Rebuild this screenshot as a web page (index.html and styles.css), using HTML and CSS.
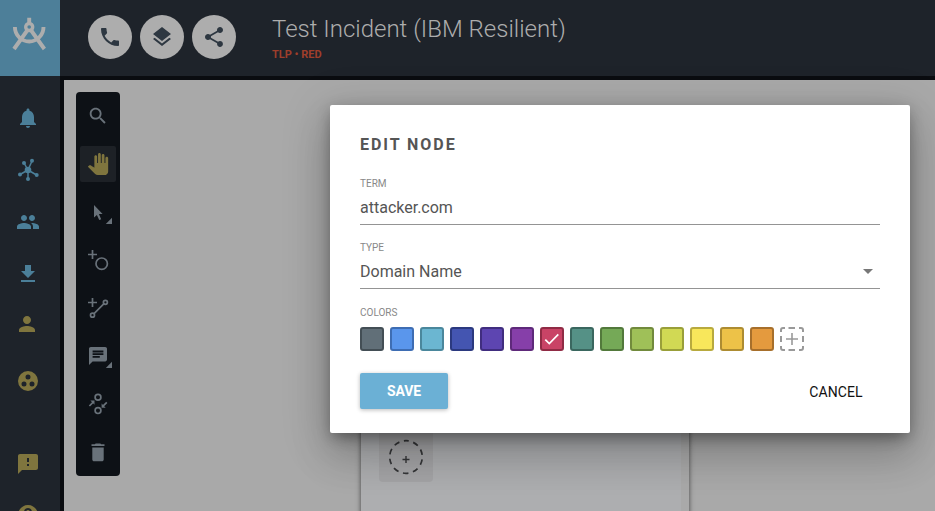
FILE: index.html
```html
<!DOCTYPE html>
<html lang="en">
<head>
<meta charset="utf-8">
<title>Test Incident (IBM Resilient)</title>
<link rel="stylesheet" href="styles.css">
</head>
<body>
<div class="app">
  <aside class="sidebar">
    <div class="logo">
      <svg width="60" height="76" viewBox="0 0 60 76" fill="none" stroke="#adadad" stroke-width="3.900">
        <path d="M29.2 17.800v5.500M27.200 30.500L14 49M31.200 30.500L44.400 49"/>
        <path d="M14.900 27a14.300 14.500 0 0 0 28.600 0"/>
        <circle cx="29.200" cy="27" r="3.500" stroke-width="3.400"/>
      </svg>
    </div>
    <nav class="nav">
      <svg class="icon blue" viewBox="0 0 24 24"><path d="M12 22c1.100 0 2-.9 2-2h-4c0 1.100.89 2 2 2zm6-6v-5c0-3.070-1.640-5.640-4.500-6.320V4c0-.83-.67-1.500-1.500-1.500s-1.500.67-1.500 1.500v.68C7.630 5.360 6 7.920 6 11v5l-2 2v1h16v-1l-2-2z"/></svg>
      <svg class="icon blue" viewBox="0 0 24 24"><path d="M12 12L8 5M12 12l4-9M12 12l-8 4.500M12 12v9M12 12l8.500 5" stroke="currentColor" stroke-width="1.500"/><circle cx="12" cy="12" r="3.300"/><circle cx="8" cy="5" r="2"/><circle cx="16" cy="2.800" r="2"/><circle cx="4" cy="16.500" r="2"/><circle cx="12" cy="21" r="2"/><circle cx="20.700" cy="17" r="2"/></svg>
      <svg class="icon blue" viewBox="0 0 24 24"><path d="M16 11c1.660 0 2.990-1.340 2.990-3S17.660 5 16 5s-3 1.340-3 3 1.340 3 3 3zm-8 0c1.660 0 2.990-1.340 2.990-3S9.660 5 8 5 5 6.340 5 8s1.340 3 3 3zm0 2c-2.330 0-7 1.170-7 3.500V19h14v-2.500C15 14.170 10.330 13 8 13zm8 0c-.29 0-.62.02-.97.05 1.160.84 1.970 1.970 1.970 3.450V19h6v-2.500c0-2.330-4.670-3.500-7-3.500z"/></svg>
      <svg class="icon blue" viewBox="0 0 24 24"><path d="M19 9h-4V3H9v6H5l7 7 7-7zM5 18v2h14v-2H5z"/></svg>
      <svg class="icon gold person" viewBox="0 0 24 24"><path d="M12 12c2.210 0 4-1.790 4-4s-1.790-4-4-4-4 1.790-4 4 1.790 4 4 4zm0 2c-2.670 0-8 1.340-8 4v2h16v-2c0-2.660-5.330-4-8-4z"/></svg>
      <svg class="icon gold group" viewBox="0 0 24 24"><path fill-rule="evenodd" d="M12 2a10 10 0 1 0 0 20a10 10 0 0 0 0-20zM8 17.500a2.500 2.500 0 1 1 0-5a2.500 2.500 0 0 1 0 5zM9.500 8a2.500 2.500 0 1 1 5 0a2.500 2.500 0 0 1-5 0zM16 17.500a2.500 2.500 0 1 1 0-5a2.500 2.500 0 0 1 0 5z"/></svg>
      <svg class="icon gold feedback" viewBox="0 0 24 24"><path fill-rule="evenodd" d="M20 2H4c-1.100 0-2 .9-2 2v18l4-4h14c1.100 0 2-.9 2-2V4c0-1.100-.9-2-2-2zm-7 12h-2v-2h2v2zm0-4h-2V6h2v4z"/></svg>
      <svg class="icon gold help" viewBox="0 0 24 24"><path d="M12 2C6.480 2 2 6.480 2 12s4.480 10 10 10 10-4.480 10-10S17.520 2 12 2zm1 17h-2v-2h2v2zm2.070-7.750l-.9.920C13.450 12.900 13 13.500 13 15h-2v-.5c0-1.100.45-2.100 1.170-2.830l1.240-1.260c.37-.36.59-.86.59-1.410 0-1.100-.9-2-2-2s-2 .9-2 2H8c0-2.210 1.790-4 4-4s4 1.790 4 4c0 .88-.36 1.680-.93 2.250z"/></svg>
    </nav>
  </aside>
  <div class="main">
    <header class="header">
      <div class="actions">
        <button class="round" aria-label="Call"><svg viewBox="0 0 24 24"><path d="M6.620 10.790c1.440 2.830 3.760 5.140 6.590 6.590l2.200-2.200c.27-.27.67-.36 1.020-.24 1.120.37 2.330.57 3.570.57.55 0 1 .45 1 1V20c0 .55-.45 1-1 1-9.390 0-17-7.610-17-17 0-.55.45-1 1-1h3.500c.55 0 1 .45 1 1 0 1.250.2 2.450.57 3.570.11.35.03.74-.25 1.020l-2.200 2.200z"/></svg></button>
        <button class="round" aria-label="Layers"><svg viewBox="0 0 24 24"><path d="M11.990 18.540l-7.370-5.730L3 14.070l9 7 9-7-1.630-1.270-7.380 5.740zM12 16l7.360-5.730L21 9l-9-7-9 7 1.630 1.270L12 16z"/></svg></button>
        <button class="round" aria-label="Share"><svg viewBox="0 0 24 24"><path d="M18 16.080c-.76 0-1.440.3-1.960.77L8.910 12.700c.05-.23.09-.46.09-.7s-.04-.47-.09-.7l7.050-4.110c.54.5 1.250.81 2.040.81 1.660 0 3-1.340 3-3s-1.340-3-3-3-3 1.340-3 3c0 .24.04.47.09.7L8.040 9.810C7.500 9.310 6.790 9 6 9c-1.660 0-3 1.340-3 3s1.340 3 3 3c.79 0 1.500-.31 2.040-.81l7.120 4.160c-.05.21-.08.43-.08.65 0 1.610 1.310 2.920 2.920 2.920s2.920-1.310 2.920-2.920-1.310-2.920-2.920-2.920z"/></svg></button>
      </div>
      <div class="heading">
        <h1>Test Incident (IBM Resilient)</h1>
        <div class="tlp">TLP • RED</div>
      </div>
    </header>
    <main class="canvas">
      <div class="toolbar">
        <svg viewBox="0 0 44 48"><g transform="translate(11 13) scale(.91)"><path d="M15.500 14h-.79l-.28-.27C15.410 12.590 16 11.110 16 9.500 16 5.910 13.090 3 9.500 3S3 5.910 3 9.500 5.910 16 9.500 16c1.610 0 3.090-.59 4.230-1.570l.27.28v.79l5 4.990L20.490 19l-4.990-5zm-6 0C7.010 14 5 11.990 5 9.500S7.010 5 9.500 5 14 7.010 14 9.500 11.990 14 9.500 14z"/></g></svg>
        <svg class="active" viewBox="0 0 44 48"><rect class="tile" x="4" y="6" width="36" height="36" rx="2"/><g transform="translate(11 13) scale(.92)"><path d="M23 5.500V20c0 2.200-1.800 4-4 4h-7.300c-1.080 0-2.100-.43-2.850-1.190L1 14.830s1.260-1.230 1.300-1.250c.22-.19.49-.29.79-.29.22 0 .42.06.6.16.04.01 4.310 2.460 4.310 2.460V4c0-.83.67-1.500 1.500-1.500S11 3.170 11 4v7h1V1.500c0-.83.67-1.500 1.500-1.500S15 .67 15 1.500V11h1V2.500c0-.83.67-1.500 1.500-1.500s1.500.67 1.500 1.500V11h1V5.500c0-.83.67-1.500 1.500-1.500s1.500.67 1.500 1.500z"/></g></svg>
        <svg viewBox="0 0 44 48"><path d="M18 17v12.500l2.900-2.600 2.300 5.200 2-.9-2.300-5.100h3.700zM36 29.800V36h-6.200z"/></svg>
        <svg viewBox="0 0 44 48"><g class="line"><path d="M12 18.500h9M16.500 14v9"/><circle cx="25.700" cy="27.700" r="5.700"/></g></svg>
        <svg viewBox="0 0 44 48"><g class="line"><path d="M12 18.500h9M16.500 14v9M17.800 29.800L28 19.700"/><circle cx="16.500" cy="31.200" r="2"/><circle cx="29.400" cy="18.300" r="2"/></g></svg>
        <svg viewBox="0 0 44 48"><g transform="translate(11.200 13.200) scale(.9)"><path fill-rule="evenodd" d="M20 2H4c-1.100 0-2 .9-2 2v18l4-4h14c1.100 0 2-.9 2-2V4c0-1.100-.9-2-2-2zM6 6h12v2H6zm0 3h12v2H6zm0 3h8v2H6z"/></g><path d="M36 29.800V36h-6.200z"/></svg>
        <svg viewBox="0 0 44 48"><g class="line"><circle cx="22" cy="17.300" r="2.900"/><circle cx="22" cy="30.600" r="2.900"/><path d="M13.400 26l3.800-3.800M30.800 22.300L27 26.100"/></g><path d="M14.400 20.600h4.100v4.100zM29.700 27.700h-4.100v-4.100z"/></svg>
        <svg viewBox="0 0 44 48"><path d="M16.300 31.500c0 1 .8 1.800 1.800 1.800h7.800c1 0 1.800-.8 1.800-1.800v-12H16.300zM28.500 16.300h-3.300l-.9-.9h-4.600l-.9.900h-3.300v1.800h13z"/></svg>
      </div>
      <section class="panel">
        <div class="node"><svg width="36" height="36" viewBox="0 0 36 36" fill="none" stroke="#353638"><circle cx="18" cy="18" r="16.300" stroke-width="1.700" stroke-dasharray="5.600 4.640" stroke-dashoffset="2.800" transform="rotate(-90 18 18)"/><path d="M14.500 20.500h7M18 17v7" stroke-width="1.400"/></svg></div>
      </section>
    </main>
  </div>
</div>

<form class="dialog">
  <h2>EDIT NODE</h2>
  <div class="field"><label>TERM</label><div class="value">attacker.com</div></div>
  <div class="field"><label>TYPE</label><div class="value">Domain Name<span class="caret"></span></div></div>
  <label>COLORS</label>
  <div class="swatches">
    <i class="slate"></i><i class="sky"></i><i class="cyan"></i><i class="navy"></i><i class="indigo"></i><i class="purple"></i>
    <i class="crimson"><svg width="20" height="20" viewBox="0 0 20 20" fill="none" stroke="#fff" stroke-width="1.700"><path d="M3.300 10.600l4 4L16.300 5.400"/></svg></i>
    <i class="teal"></i><i class="green"></i><i class="olive"></i><i class="lime"></i><i class="yellow"></i><i class="amber"></i><i class="orange"></i>
    <svg class="add" width="24" height="24" viewBox="0 0 24 24" fill="none" stroke="#999"><path stroke-width="2" d="M1 5V3q0-2 2-2h2M19 1h2q2 0 2 2v2M23 19v2q0 2-2 2h-2M5 23H3q-2 0-2-2v-2M8.500 1h6.500M8.500 23h6.500M1 9v6M23 9v6"/><path stroke-width="1.600" d="M6 12h12M12 6v12"/></svg>
  </div>
  <div class="buttons"><button type="button" class="save">SAVE</button><button type="button" class="cancel">CANCEL</button></div>
</form>
</body>
</html>
```
FILE: styles.css
```css
* { box-sizing: border-box; }
body { margin: 0; height: 511px; overflow: hidden; position: relative; font-family: Roboto, sans-serif; background: #0a0c10; }
h1, h2 { margin: 0; }
button { border: 0; padding: 0; font: inherit; }
svg { display: block; flex: none; }

.app { display: flex; height: 511px; gap: 4px; }
.sidebar { width: 60px; flex: none; background: #1e232a; overflow: hidden; }
.logo { height: 76px; background: #4d7f99; }
.nav { display: flex; flex-direction: column; align-items: center; padding: 30px 4px 0 0; gap: 28px; }
.icon { width: 24px; height: 24px; fill: currentColor; }
.blue { color: #4b7f99; }
.gold { color: #7f753e; }
.person { margin: -2px 2px 0 0; }
.group { margin-top: 5px; }
.feedback { margin-top: 31px; }
.help { margin-top: -1px; }

.main { flex: 1; display: flex; flex-direction: column; gap: 4px; min-width: 0; }
.header { height: 76px; flex: none; margin-left: -4px; padding-left: 28px; background: #1e232a; display: flex; }
.actions { display: flex; gap: 8px; padding-top: 15px; }
.round { width: 44px; height: 44px; border-radius: 50%; background: #adadad; display: flex; align-items: center; justify-content: center; }
.round svg { width: 24px; height: 24px; fill: #2d3741; }
.heading { padding: 13px 0 0 36px; }
h1 { font-size: 24px; line-height: 32px; font-weight: 300; color: #adadad; white-space: nowrap; }
.tlp { font-size: 11px; line-height: 14px; font-weight: 700; color: #9f3e2b; margin-top: 3px; }

.canvas { flex: 1; position: relative; background: #a9a9a9; padding: 12px; overflow: hidden; }
.toolbar { width: 44px; height: 384px; border-radius: 4px; background: #0d1116; display: flex; flex-direction: column; }
.toolbar svg { width: 44px; height: 48px; fill: #69727a; }
.toolbar .line { fill: none; stroke: #69727a; stroke-width: 1.7; }
.toolbar .active { fill: #7f753e; }
.toolbar .tile { fill: #1d2126; }
.panel { position: absolute; left: 297px; top: 120px; width: 328px; height: 350px; background: #adaeb0; border-right: 8px solid #a9a9a9; box-shadow: 0 1px 5px rgba(0, 0, 0, .6); display: flex; align-items: flex-start; padding: 228px 0 0 18px; }
.node { width: 54px; height: 54px; border-radius: 4px; background: #a4a4a6; display: flex; padding: 11px 9px; }

.dialog { position: absolute; left: 330px; top: 105px; width: 580px; height: 328px; padding: 30px; border-radius: 2px; background: #fff; box-shadow: 0 11px 15px -7px rgba(0, 0, 0, .2), 0 24px 38px 3px rgba(0, 0, 0, .14), 0 9px 46px 8px rgba(0, 0, 0, .12), 0 4px 14px rgba(0, 0, 0, .22); }
h2 { font-size: 16px; line-height: 20px; font-weight: 700; letter-spacing: 1.95px; color: #555; margin-bottom: 22px; }
label { display: block; font-size: 10px; line-height: 14px; color: #888; }
.field { height: 64px; }
.value { display: flex; align-items: center; justify-content: space-between; height: 34px; border-bottom: 1px solid #949494; font-size: 16px; color: #555; }
.caret { border: 5px solid transparent; border-top-color: #777; border-bottom: 0; margin-right: 7px; }
.field + label { margin-top: 1px; }
.swatches { display: flex; gap: 6px; margin-top: 7px; }
.swatches i { width: 24px; height: 24px; border-width: 2px; border-style: solid; border-radius: 3px; }
.slate { background: #616f78; border-color: #434e55; }
.sky { background: #5a96ec; border-color: #3e6db3; }
.cyan { background: #6bb6d1; border-color: #4a879c; }
.navy { background: #4455b1; border-color: #2b397f; }
.indigo { background: #5d45b1; border-color: #402d7f; }
.purple { background: #863fa9; border-color: #5e297a; }
.crimson { background: #c94366; border-color: #902b45; }
.teal { background: #559186; border-color: #3a675f; }
.green { background: #75a957; border-color: #52793b; }
.olive { background: #9fc058; border-color: #718a3c; }
.lime { background: #d1d954; border-color: #999f39; }
.yellow { background: #f8e75b; border-color: #b8aa3e; }
.amber { background: #edc248; border-color: #ad8c31; }
.orange { background: #e49a3e; border-color: #a76f2b; }
.buttons { display: flex; justify-content: space-between; margin-top: 22px; }
.buttons button { width: 88px; height: 36px; border-radius: 2px; font-size: 14px; font-weight: 400; }
.save { background: #6bb0d5; color: #fff; box-shadow: 0 1px 4px rgba(0, 0, 0, .28); }
.buttons .save { font-weight: 700; letter-spacing: -.1px; }
.cancel { background: none; color: #111; padding-top: 1px; letter-spacing: .1px; }
```
